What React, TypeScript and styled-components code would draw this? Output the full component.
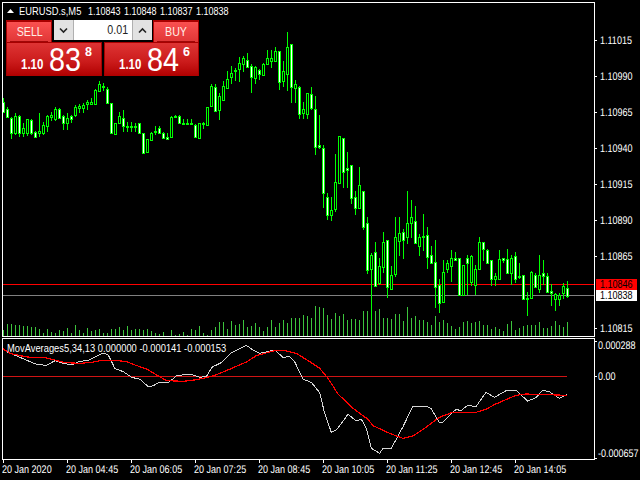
import React from 'react';
import styled, { createGlobalStyle } from 'styled-components';

const FONT = '"Liberation Sans", Arial, sans-serif';
const GREEN = '#00ff00';

const Global = createGlobalStyle`
  html, body { margin: 0; padding: 0; background: #000; }
`;

const Page = styled.div`
  position: relative; width: 640px; height: 480px; box-sizing: border-box;
  padding: 2px 0 0 2px; background: #000; overflow: hidden;
  font-family: ${FONT}; color: #fff;
`;
const PaneRow = styled.div<{ $gap?: number }>`
  display: flex; margin-top: ${p => p.$gap ?? 0}px;
`;
const Pane = styled.div<{ $h: number }>`
  width: 593px; height: ${p => p.$h}px; box-sizing: border-box;
  border: 1px solid #fff; flex: none;
`;
const Drawing = styled.svg`
  display: block;
`;
const AxisText = styled.text`
  font-family: ${FONT}; font-size: 11px; fill: #fff;
`;
const Narrow = styled.span<{ $w: number; $sx?: number; $origin?: string }>`
  display: inline-block; width: ${p => p.$w}px; white-space: pre; flex: none;
  transform: scaleX(${p => p.$sx ?? 0.82}); transform-origin: ${p => p.$origin ?? 'left'} center;
`;
const Header = styled.div`
  position: absolute; left: 7px; top: 4px; height: 14px; display: flex; align-items: center;
  font-size: 11px; color: #fff;
`;
const Triangle = styled.svg`
  margin-right: 5px; flex: none;
`;
const IndicatorLabel = styled.div`
  position: absolute; left: 7px; top: 341px; font-size: 11px; line-height: 14px; color: #fff;
`;
const PriceFlag = styled.div<{ $bg: string; $top: number }>`
  position: absolute; left: 596px; top: ${p => p.$top}px; width: 41px; height: 11px;
  background: ${p => p.$bg}; color: #000; font-size: 11px; line-height: 11px;
  padding-left: 4px; box-sizing: border-box;
`;
const TradePanel = styled.div`
  position: absolute; left: 6px; top: 20px; width: 193px; height: 56px;
  display: flex; flex-direction: column;
`;
const TradeTop = styled.div`
  display: flex; height: 22px; justify-content: space-between; align-items: flex-start;
`;
const SideButton = styled.div`
  position: relative; width: 46px; height: 22px; box-sizing: border-box;
  background: linear-gradient(#fa5050, #e03636);
  border: 1px solid #a80000; border-top-width: 2px; border-bottom: none;
  color: #ffeee6; font-size: 13px; line-height: 20px; text-align: center;
  &::after {
    content: ''; position: absolute; left: 3px; right: 3px; bottom: 0; height: 1px; background: #a00808;
  }
`;
const Spinner = styled.div`
  width: 98px; height: 20px; display: flex; box-sizing: border-box; background: #d8d8d8;
`;
const SpinButton = styled.div`
  width: 20px; flex: none; display: flex; align-items: center; justify-content: center;
  background: #e2e2e2; border-right: 1px solid #b0b0b0; box-sizing: border-box;
  &:last-child { border-right: none; border-left: 1px solid #b0b0b0; }
`;
const LotInput = styled.div`
  flex: 1; background: #fff; color: #222; font-size: 13px; line-height: 20px; text-align: right; padding-right: 5px;
`;
const TradeBottom = styled.div`
  display: flex; gap: 2px; height: 34px;
`;
const QuotePanel = styled.div<{ $w: number }>`
  width: ${p => p.$w}px; height: 34px; box-sizing: border-box; padding-left: 14px;
  display: flex; align-items: flex-start;
  background: linear-gradient(#de3434 0%, #cc1c1c 55%, #b00000 100%);
  border: 1px solid #a80000; border-bottom: none; color: #fff;
`;
const QuoteBase = styled(Narrow)`
  font-size: 14px; font-weight: 700; line-height: 15px; margin-top: 14px;
`;
const QuoteBig = styled(Narrow)`
  font-size: 33px; line-height: 33px; margin: 0 4px 0 5px;
`;
const QuoteSup = styled.span`
  font-size: 12.5px; font-weight: 700; line-height: 12px; margin-top: 3px;
`;

type C = number[];
const seq = (off: number, rows: C[]) =>
  rows.map(r => ({
    hi: Math.round(off + r[0] / 3), top: Math.round(off + r[1] / 3),
    bot: Math.round(off + r[2] / 3), lo: Math.round(off + r[3] / 3), fill: r[4] === 1,
  }));

const candles = [
  ...seq(0, [
    [295,305,335,340,1],[322,328,350,352,1],[350,355,398,418,1],[340,348,398,405,0],[345,348,398,412,1],
    [370,383,398,410,0],[358,358,398,408,0],[358,360,398,405,1],[393,395,412,415,1],[340,393,400,410,0],
    [365,375,400,405,0],[345,348,378,395,0],[335,345,350,362,0],[322,328,358,362,0],[325,328,355,358,1],
    [345,348,368,390,1],[340,353,368,390,0],[345,348,358,370,1],[315,322,345,350,0],[312,318,325,340,0],
    [310,315,325,340,0],[300,305,312,330,0],[295,305,312,312,0],[268,270,312,312,0],[243,252,272,275,0],
    [250,258,262,272,1],[262,268,308,310,1],[310,310,398,400,1],[368,370,402,402,0],[335,348,370,372,0],
    [330,355,378,395,1],[365,377,380,395,1],[365,378,381,395,1],[368,377,380,395,1],[368,370,398,400,1],
    [400,400,458,458,1],[418,418,455,458,0],[395,398,420,422,0],[378,393,397,405,1],[378,385,398,400,1],
    [395,400,415,418,1],[400,412,418,420,1],[348,350,410,412,0],[346,348,352,354,1],[346,348,368,372,1],
    [358,368,370,372,1],[358,369,371,372,1],[358,369,371,375,1],[372,375,410,412,1],[368,370,415,417,0],
    [365,368,372,388,1],[320,322,375,378,0],
    [252,258,318,318,0],[252,262,332,332,1],[280,288,330,360,0],[243,258,300,302,0],[213,238,263,265,0],
    [198,220,230,252,0],[205,210,213,243,1],[170,190,207,245,0],[168,175,191,215,0],[158,180,200,200,1],
    [192,198,230,278,1],[198,202,233,252,0],[208,210,222,240,1],[190,192,225,226,0],[150,175,192,195,0],
    [150,175,182,203,0],[140,153,182,183,0],[152,153,245,270,1],[182,213,243,262,0],[96,141,221,272,0],
    [131,132,260,310,1],[240,252,263,310,0],[258,261,341,357,1],[305,327,338,357,0],[278,279,342,357,0],
    [261,282,323,330,1],
  ]),
  ...seq(120, [
    [0,-30,80,105,1],[-16,75,80,87,1],[75,85,220,263,1],[220,232,284,300,1],[232,270,285,303,0],
    [102,186,266,276,0],[47,48,188,188,0],[54,55,155,204,1],[96,145,149,205,1],[135,136,233,252,1],
    [213,232,263,285,1],[141,196,263,263,0],[213,214,320,330,1],[292,310,449,462,1],[400,406,446,600,0],
    [366,397,497,497,1],[415,439,488,495,0],[336,366,440,460,0],[360,361,500,533,1],[438,466,507,507,0],
    [292,352,461,470,0],[292,340,362,408,0],[326,337,361,416,1],[213,310,352,372,0],[240,292,310,353,0],
    [258,304,370,372,1],[343,352,377,408,0],[282,349,352,393,1],[321,344,410,447,1],[378,406,430,432,1],
    [360,427,500,565,1],[478,495,548,580,1],[420,457,545,546,0],[420,430,446,460,0],[390,415,437,486,0],
    [396,415,419,420,1],
  ]),
  ...seq(180, [
    [234,235,345,346,1],[255,256,345,346,0],[225,235,250,345,1],[225,228,305,318,0],[255,268,315,345,0],
    [170,187,266,268,0],[186,187,208,243,1],[208,210,248,253,1],[240,241,296,318,1],[278,289,298,318,0],
    [210,237,296,297,0],[234,235,239,250,1],[207,237,278,280,1],[225,235,280,315,0],[215,229,297,310,1],
    [250,288,291,297,1],[285,286,358,359,1],[335,353,356,407,1],[272,277,355,356,0],[280,286,320,322,1],
    [225,286,328,340,0],[240,280,289,315,1],[280,288,335,338,1],[312,334,338,377,1],[340,343,358,392,0],
    [338,345,358,377,0],[310,318,339,358,0],[303,325,347,355,1],
  ]),
];
candles[78].top = 109;
candles[78].hi = 96;

const volumeTops = [
  ...[30,12,12,15,15,18,18,22,22,27,40,27,35,40,30,33,24,40,15,30,40,24,32,30,27,40,38,27,27,22,30,18,30,27,27,30,27,33,38,43,37,47,30,45,42,37,45,27,30,18,38,45,30].map(v => Math.round(320 + v / 3)),
  327,322,322,329,321,325,324,320,327,326,323,327,331,327,320,327,323,320,323,318,318,318,315,316,318,
  306,307,308,315,319,313,316,314,320,319,319,320,311,311,318,311,309,318,318,319,314,314,321,307,318,316,320,
  320,322,325,316,322,320,323,326,329,327,322,321,323,322,321,325,325,329,327,329,331,324,321,330,328,326,325,325,325,322,328,328,326,321,325,327,322,
];

const seg = (off: number, pts: number[][]) => pts.map(p => `${off + p[0] / 3},${320 + p[1] / 3}`).join(' ');

const whiteLine = [
  seg(0, [[8,88],[30,100],[60,112],[90,125],[110,133],[140,136],[165,122],[190,130],[215,135],[235,125],[265,121],[290,108],[310,99],[325,105],[345,146],[370,155],[395,172],[420,178],[445,200],[460,197],[480,186],[505,188],[530,167],[570,162],[600,172],[620,168],[636,142]]),
  seg(213, [[0,140],[25,128],[55,98],[100,76],[120,90],[140,100],[185,90],[210,112],[230,110],[245,125],[270,178],[295,187],[320,218],[335,280],[355,337],[370,330],[405,283],[430,303],[445,298],[460,325],[475,385],[500,400],[510,385],[535,385],[570,320],[600,258]]),
  seg(426, [[0,258],[15,265],[40,307],[50,307],[90,268],[105,272],[125,256],[150,260],[180,217],[205,232],[240,212],[270,211],[305,243],[330,233],[350,211],[370,215],[400,235],[422,224]]),
].join(' ');
const redLine = [
  seg(0, [[8,86],[30,100],[60,107],[90,112],[135,113],[165,120],[195,128],[240,130],[275,127],[305,121],[345,121],[380,125],[405,135],[440,147],[470,165],[500,182],[550,184],[590,179]]),
  seg(213, [[0,168],[40,152],[100,126],[130,107],[185,92],[215,92],[250,100],[290,125],[320,145],[345,175],[375,222],[420,265],[465,298],[480,317],[530,340],[570,355],[600,348]]),
  seg(426, [[0,322],[40,292],[80,277],[150,277],[180,268],[205,254],[270,226],[300,222],[422,226]]),
].join(' ');

const priceTicks: [string, number][] = [
  ['1.11015', 40], ['1.10990', 76], ['1.10965', 112], ['1.10940', 148], ['1.10915', 184],
  ['1.10890', 220], ['1.10865', 256], ['1.10815', 328],
];
const timeLabels = ['20 Jan 2020', '20 Jan 04:45', '20 Jan 06:05', '20 Jan 07:25', '20 Jan 08:45', '20 Jan 10:05', '20 Jan 11:25', '20 Jan 12:45', '20 Jan 14:05'];

const Label = ({ x, y, children }: { x: number; y: number; children: React.ReactNode }) => (
  <AxisText transform={`translate(${x} ${y}) scale(0.82 1)`} textRendering="geometricPrecision">{children}</AxisText>
);

const Chevron = ({ up }: { up?: boolean }) => (
  <svg width="9" height="7" viewBox="0 0 9 7">
    <path d={up ? 'M1 5.5 L4.5 2 L8 5.5' : 'M1 1.5 L4.5 5 L8 1.5'} fill="none" stroke="#222" strokeWidth="1.6" />
  </svg>
);

const Quote = ({ w, big, sup }: { w: number; big: string; sup: string }) => (
  <QuotePanel $w={w}>
    <QuoteBase $w={23}>1.10</QuoteBase>
    <QuoteBig $w={32} $sx={0.87}>{big}</QuoteBig>
    <QuoteSup>{sup}</QuoteSup>
  </QuotePanel>
);

export default function App() {
  return (
    <Page>
      <Global />
      <PaneRow>
        <Pane $h={335}>
          <Drawing width={591} height={333} viewBox="3 3 591 333" shapeRendering="crispEdges">
            {volumeTops.map((t, i) => (
              <rect key={i} x={3 + 4 * i} y={t} width={1} height={337 - t} fill="#3cc43c" />
            ))}
            <rect x={3} y={295} width={591} height={1} fill="#808080" />
            <rect x={3} y={284} width={591} height={1} fill="#ff0000" />
            {candles.map((c, i) => {
              const x = 3 + 4 * i;
              const h = Math.max(c.bot - c.top, 1);
              return (
                <g key={i}>
                  <rect x={x} y={c.hi} width={1} height={Math.max(c.lo - c.hi, 1)} fill={GREEN} />
                  <rect x={x - 1} y={c.top} width={3} height={h + 1} fill={GREEN} />
                  {h > 1 && <rect x={x} y={c.top + 1} width={1} height={h - 1} fill={c.fill ? '#ffffff' : '#000000'} />}
                </g>
              );
            })}
          </Drawing>
        </Pane>
        <Drawing width={45} height={335} viewBox="595 2 45 335" shapeRendering="crispEdges">
          {priceTicks.map(([label, y]) => (
            <g key={label}>
              <rect x={595} y={y} width={2} height={1} fill="#fff" />
              <Label x={600} y={y + 4}>{label}</Label>
            </g>
          ))}
        </Drawing>
      </PaneRow>
      <PaneRow $gap={1}>
        <Pane $h={122}>
          <Drawing width={591} height={120} viewBox="3 339 591 120" shapeRendering="crispEdges">
            <rect x={3} y={376} width={564} height={1} fill="#d01414" />
            <polyline points={whiteLine} fill="none" stroke="#d4d4d4" strokeWidth={1} />
            <polyline points={redLine} fill="none" stroke="#ff0000" strokeWidth={1.2} />
          </Drawing>
        </Pane>
        <Drawing width={45} height={122} viewBox="595 338 45 122" shapeRendering="crispEdges">
          <rect x={595} y={341} width={2} height={1} fill="#fff" />
          <rect x={595} y={376} width={2} height={1} fill="#fff" />
          <rect x={595} y={458} width={2} height={1} fill="#fff" />
          <Label x={598} y={349}>0.000288</Label>
          <Label x={598} y={380}>0.00</Label>
          <Label x={598} y={457}>-0.000657</Label>
        </Drawing>
      </PaneRow>
      <Drawing width={638} height={20} viewBox="2 460 638 20" shapeRendering="crispEdges">
        {timeLabels.map((t, i) => (
          <g key={t}>
            <rect x={3 + 64 * i} y={460} width={1} height={3} fill="#fff" />
            <Label x={2 + 64 * i} y={473}>{t}</Label>
          </g>
        ))}
      </Drawing>

      <Header>
        <Triangle width="7" height="4" viewBox="0 0 7 4"><path d="M3.5 0 L7 4 L0 4 Z" fill="#fff" /></Triangle>
        <Narrow $w={69} $sx={0.85}>EURUSD.s,M5</Narrow>
        <Narrow $w={36}>1.10843</Narrow>
        <Narrow $w={36}>1.10848</Narrow>
        <Narrow $w={36}>1.10837</Narrow>
        <Narrow $w={36}>1.10838</Narrow>
      </Header>
      <IndicatorLabel>
        <Narrow $w={219} $sx={0.85}>MovAverages5,34,13 0.000000 -0.000141 -0.000153</Narrow>
      </IndicatorLabel>
      <PriceFlag $bg="#ff0000" $top={279}><Narrow $w={33}>1.10846</Narrow></PriceFlag>
      <PriceFlag $bg="#ffffff" $top={290}><Narrow $w={33}>1.10838</Narrow></PriceFlag>

      <TradePanel>
        <TradeTop>
          <SideButton><Narrow $w={30} $origin="center">SELL</Narrow></SideButton>
          <Spinner>
            <SpinButton><Chevron /></SpinButton>
            <LotInput><Narrow $w={24} $origin="right">0.01</Narrow></LotInput>
            <SpinButton><Chevron up /></SpinButton>
          </Spinner>
          <SideButton><Narrow $w={30} $origin="center">BUY</Narrow></SideButton>
        </TradeTop>
        <TradeBottom>
          <Quote w={96} big="83" sup="8" />
          <Quote w={95} big="84" sup="6" />
        </TradeBottom>
      </TradePanel>
    </Page>
  );
}
